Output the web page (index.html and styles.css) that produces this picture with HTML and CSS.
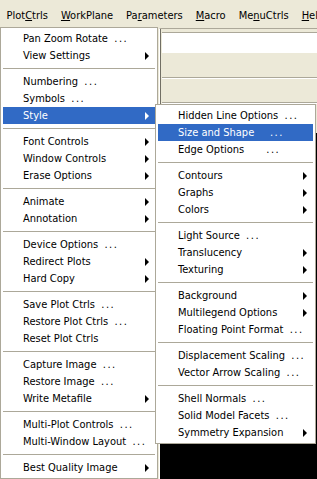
FILE: index.html
```html
<!DOCTYPE html>
<html>
<head>
  <title>PlotCtrls Menu</title>
  <meta name="viewport" content="width=device-width, initial-scale=1">
  <link rel="stylesheet" href="styles.css">
</head>
<body>
  <div class="menubar">
    <span class="top-item">Plot<u>C</u>trls</span>
    <span class="top-item"><u>W</u>orkPlane</span>
    <span class="top-item">Pa<u>r</u>ameters</span>
    <span class="top-item"><u>M</u>acro</span>
    <span class="top-item">Me<u>n</u>uCtrls</span>
    <span class="top-item"><u>H</u>elp</span>
  </div>

  <div class="workspace">
    <div class="gutter"></div>
    <div class="frame">
      <div class="toolbar"></div>
      <div class="band"></div>
      <div class="band"></div>
      <div class="graphics"></div>
    </div>
  </div>

  <!-- PlotCtrls dropdown -->
  <div class="menu main-menu">
    <div class="item">Pan Zoom Rotate  <span class="dots">...</span></div>
    <div class="item">View Settings<i class="arrow"></i></div>
    <div class="sep"></div>
    <div class="item">Numbering  <span class="dots">...</span></div>
    <div class="item">Symbols  <span class="dots">...</span></div>
    <div class="item active">Style<i class="arrow"></i></div>
    <div class="sep"></div>
    <div class="item">Font Controls<i class="arrow"></i></div>
    <div class="item">Window Controls<i class="arrow"></i></div>
    <div class="item">Erase Options<i class="arrow"></i></div>
    <div class="sep"></div>
    <div class="item">Animate<i class="arrow"></i></div>
    <div class="item">Annotation<i class="arrow"></i></div>
    <div class="sep"></div>
    <div class="item">Device Options  <span class="dots">...</span></div>
    <div class="item">Redirect Plots<i class="arrow"></i></div>
    <div class="item">Hard Copy<i class="arrow"></i></div>
    <div class="sep"></div>
    <div class="item">Save Plot Ctrls  <span class="dots">...</span></div>
    <div class="item">Restore Plot Ctrls  <span class="dots">...</span></div>
    <div class="item">Reset Plot Ctrls</div>
    <div class="sep"></div>
    <div class="item">Capture Image  <span class="dots">...</span></div>
    <div class="item">Restore Image  <span class="dots">...</span></div>
    <div class="item">Write Metafile<i class="arrow"></i></div>
    <div class="sep"></div>
    <div class="item">Multi-Plot Controls  <span class="dots">...</span></div>
    <div class="item">Multi-Window Layout  <span class="dots">...</span></div>
    <div class="sep"></div>
    <div class="item">Best Quality Image<i class="arrow"></i></div>
  </div>

  <!-- Style submenu -->
  <div class="menu sub-menu">
    <div class="item">Hidden Line Options  <span class="dots">...</span></div>
    <div class="item active">Size and Shape     <span class="dots">...</span></div>
    <div class="item">Edge Options       <span class="dots">...</span></div>
    <div class="sep"></div>
    <div class="item">Contours<i class="arrow"></i></div>
    <div class="item">Graphs<i class="arrow"></i></div>
    <div class="item">Colors<i class="arrow"></i></div>
    <div class="sep"></div>
    <div class="item">Light Source  <span class="dots">...</span></div>
    <div class="item">Translucency<i class="arrow"></i></div>
    <div class="item">Texturing<i class="arrow"></i></div>
    <div class="sep"></div>
    <div class="item">Background<i class="arrow"></i></div>
    <div class="item">Multilegend Options<i class="arrow"></i></div>
    <div class="item">Floating Point Format  <span class="dots">...</span></div>
    <div class="sep"></div>
    <div class="item">Displacement Scaling  <span class="dots">...</span></div>
    <div class="item">Vector Arrow Scaling  <span class="dots">...</span></div>
    <div class="sep"></div>
    <div class="item">Shell Normals  <span class="dots">...</span></div>
    <div class="item">Solid Model Facets  <span class="dots">...</span></div>
    <div class="item">Symmetry Expansion<i class="arrow"></i></div>
  </div>
</body>
</html>
```

FILE: styles.css
```css
body {
  margin: 0;
  width: 317px;
  height: 479px;
  overflow: hidden;
  position: relative;
  background-color: #ece9d8;
  font-family: "DejaVu Sans Condensed", "DejaVu Sans", sans-serif;
  font-size: 11px;
  color: #000;
}
.menubar {
  display: flex;
  height: 28px;
  padding-top: 3px;
  box-sizing: border-box;
  align-items: center;
  white-space: nowrap;
  overflow: hidden;
}
.top-item {
  padding: 0 6.5px;
}
.workspace {
  display: flex;
  height: 451px;
}
.gutter {
  width: 159px;
}
.frame {
  flex: 1;
  display: flex;
  flex-direction: column;
  border-top: 1px solid #aca899;
  border-left: 1px solid #fff;
  box-shadow: inset 1px 0 0 #716f64;
}
.toolbar {
  height: 20px;
  margin-top: 3px;
  margin-left: 2px;
  border-top: 1px solid #aca899;
  background-color: #fff;
}
.band {
  height: 24px;
  margin-left: 2px;
  border-bottom: 1px solid #aca899;
  box-shadow: 0 1px 0 #fff;
}
.graphics {
  flex: 1;
  margin-top: 30px;
  background-color: #000;
}

/* dropdown menus */
.menu {
  position: absolute;
  box-sizing: border-box;
  padding: 2px;
  background-color: #fff;
  border: 1px solid #aca899;
}
.main-menu {
  left: 0;
  top: 27px;
  width: 158px;
}
.sub-menu {
  left: 155px;
  top: 104px;
  width: 161px;
}
.item {
  display: flex;
  align-items: center;
  height: 17px;
  padding: 0 6px 0 20px;
  white-space: pre;
}
.item.active {
  background-color: #316ac5;
  color: #fff;
}
.dots {
  letter-spacing: 1.5px;
}
.arrow {
  margin-left: auto;
  width: 0;
  height: 0;
  border-top: 4px solid transparent;
  border-bottom: 4px solid transparent;
  border-left: 4px solid currentColor;
}
.sep {
  height: 1px;
  margin: 4px 0;
  background-color: #aca899;
}
```
